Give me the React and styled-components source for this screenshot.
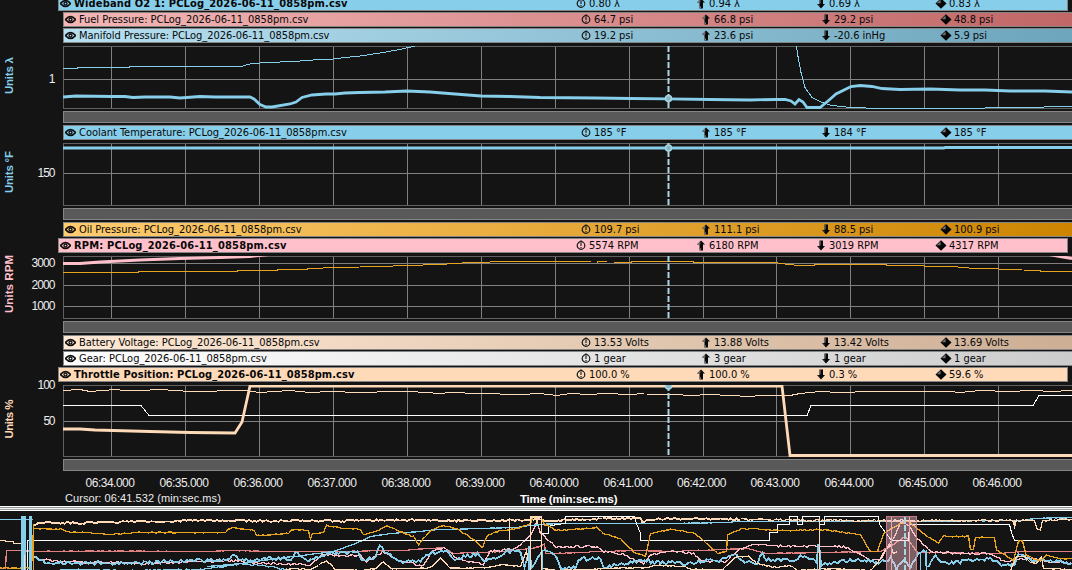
import styled, { createGlobalStyle } from "styled-components"
import React from "react"

const GlobalStyle = createGlobalStyle`
    * {
        box-sizing: border-box;
    }
    body {
        margin: 0;
        background: #141414;
        overflow: hidden;
    }
`

const Viewer = styled.div`
    width: 1072px;
    height: 570px;
    overflow: hidden;
    background: #141414;
    color: #ececec;
    font-family: "Liberation Sans", sans-serif;
`

const Panels = styled.div`
    display: flex;
    flex-direction: column;
    gap: 2px;
    margin-top: -4px;
`

const Panel = styled.section`
    display: flex;
    flex-direction: column;
    gap: 2px;
`

const Legend = styled.div`
    display: flex;
    flex-direction: column;
    gap: 1px;
    padding-bottom: 1px;
`

const LegendRow = styled.div`
    display: grid;
    grid-template-columns: 517px repeat(4, 120px);
    align-items: center;
    height: 15px;
    margin-left: ${props => props.$active ? `58px` : `63px`};
    margin-right: ${props => props.$active ? `4px` : `-8px`};
    border: 1px solid #858585;
    background: ${props => props.$fill};
    color: #080808;
    font-family: "DejaVu Sans Condensed", "DejaVu Sans", sans-serif;
    font-stretch: condensed;
    font-size: 11px;
    line-height: 13px;
    white-space: nowrap;
`

const ChannelName = styled.div`
    display: flex;
    align-items: center;
    gap: 3px;
    padding-left: 1px;
    font-weight: ${props => props.$active ? 700 : 400};
    letter-spacing: ${props => props.$spacing}px;
`

const Stat = styled.div`
    display: flex;
    align-items: center;
    gap: 3px;
    letter-spacing: -0.03px;
`

const Chart = styled.svg`
    display: block;
    overflow: visible;
    font-family: "Liberation Sans", sans-serif;
    font-size: 12px;
`

const ScrollTrack = styled.div`
    height: 12px;
    margin: 0 -2px 0 63px;
    border: 1px solid #858585;
    background: #595959;
`

const TimeAxis = styled.div`
    display: grid;
    grid-template-columns: 74px 74px 74px 74px 74px 74px 74px 74px 73px 74px 74px 74px 74px;
    margin-left: 73px;
    padding-top: 4px;
    height: 19px;
    font-size: 12px;
    line-height: 16px;
    text-align: center;
`

const TimeLabel = styled.span`
    letter-spacing: -0.5px;
`

const Footer = styled.div`
    display: grid;
    grid-template-columns: 455px 1fr;
    height: 16px;
    padding-left: 65px;
    font-size: 11px;
    line-height: 16px;
    white-space: nowrap;
`

const CursorTime = styled.span`
    letter-spacing: 0.06px;
`

const AxisTitle = styled.strong`
    font-size: 11.5px;
    line-height: 19px;
    letter-spacing: -0.2px;
    color: #fff;
`

const Splitter = styled.div`
    height: 5px;
    background: linear-gradient(#fff 1px, #8f9494 1px 2px, #f1f1f1 2px 3px, #a2a6a6 3px 4px, #fff 4px);
`

const SKY = "#87ceeb"
const PINK = "#ffc0cb"
const PEACH = "#ffdab9"
const ORANGE = "#e9a41f"
const CORAL = "#e08080"

const GRID_X = [111, 185, 259, 333, 407, 481, 555, 629, 703, 776, 850, 924, 998]
const CURSOR_X = 668.5

const panels = [
    {
        title: "Units λ", color: SKY, top: 46, height: 63, titleY: 75.5, titleLength: 37,
        ticks: [{ y: 79, label: "1" }],
        marker: 98.5,
        rows: [
            { name: "Wideband O2 1", active: true, spacing: 0.15, fill: SKY, stats: ["0.80 λ", "0.94 λ", "0.69 λ", "0.83 λ"] },
            { name: "Fuel Pressure", spacing: -0.03, fill: "linear-gradient(90deg, #f4b6b6, #c06666)", stats: ["64.7 psi", "66.8 psi", "29.2 psi", "48.8 psi"] },
            { name: "Manifold Pressure", spacing: -0.05, fill: "linear-gradient(90deg, #b7e0f1, #6ca5bc)", stats: ["19.2 psi", "23.6 psi", "-20.6 inHg", "5.9 psi"] },
        ],
        lines: [
            { color: SKY, points: "63,68 77,68 78,67 129,67 130,66 241,66 250,63.5 260,62.5 280,61.5 300,60.5 320,59 333,58.5 345,57 360,55.5 380,52.5 400,49 417,45" },
            { color: SKY, points: "796.5,46 798,56 801,72 805,87 812,97 822,102 832,105 850,107 882,108 980,108 985,107.5 1030,107 1072,105.5" },
            { color: SKY, wide: true, points: "63,97 76,96 112,96.5 125,96.5 133,97.5 145,97 170,97 180,98 200,96.5 215,97 250,97 254,99 260,104.5 266,107 272,107 290,104 296,102 302,97.5 312,95 326,94 335,94 345,93 360,92.5 385,92 407,91 430,92 455,94 481,96 510,96.5 540,97.5 595,98 630,98.5 668,98.8 710,99.5 750,100 775,99.5 785,99.5 791,101 795,104 799,99.5 803,102 807,107.5 820,107.5 828,101 836,94 845,89.5 851,86.5 860,85.5 872,86.5 882,88.5 900,89.5 930,89 960,90 985,90 1010,91 1045,91 1072,92" },
        ],
    },
    {
        title: "Units °F", color: SKY, top: 143, height: 63, titleY: 172, titleLength: 42,
        ticks: [{ y: 173, label: "150" }],
        marker: 148,
        rows: [
            { name: "Coolant Temperature", spacing: -0.02, fill: SKY, stats: ["185 °F", "185 °F", "184 °F", "185 °F"] },
        ],
        lines: [
            { color: SKY, wide: true, points: "63,148 944,148 945,147.5 1072,147.5" },
        ],
    },
    {
        title: "Units RPM", color: PINK, top: 256, height: 63, titleY: 284, titleLength: 58,
        ticks: [{ y: 263, label: "3000" }, { y: 285, label: "2000" }, { y: 306, label: "1000" }],
        rows: [
            { name: "Oil Pressure", spacing: -0.03, fill: "linear-gradient(90deg, #ffcc70, #cc8400)", stats: ["109.7 psi", "111.1 psi", "88.5 psi", "100.9 psi"] },
            { name: "RPM", active: true, spacing: 0.18, fill: PINK, stats: ["5574 RPM", "6180 RPM", "3019 RPM", "4317 RPM"] },
        ],
        lines: [
            { color: ORANGE, points: "63,272 138,272 138,271 237,271 237,270 277,270 277,269 307,269 307,268 340,267 380,266 407,265 440,264 470,262 510,261 591,261" },
            { color: ORANGE, points: "597,262 598,261 607,261" },
            { color: ORANGE, points: "614,262 631,262 631,261 693,261 693,262 775,262 788,264 800,265 814,265 814,264 886,264 886,265 923,265 925,266 952,266 975,268 1022,269" },
            { color: ORANGE, points: "1024,270 1040,270 1040,271 1072,271" },
            { color: PINK, wide: true, points: "63,263.5 80,263.5 100,262 140,260 180,258.5 220,257.5 250,256.5 275,254" },
            { color: PINK, wide: true, points: "1040,253 1060,256.5 1072,258.5" },
        ],
    },
    {
        title: "Units %", color: PEACH, top: 385, height: 72, titleY: 419, titleLength: 39,
        ticks: [{ y: 385, label: "100" }, { y: 421, label: "50" }],
        marker: 386,
        rows: [
            { name: "Battery Voltage", spacing: -0.03, fill: "linear-gradient(90deg, #ffe9d5, #ccae94)", stats: ["13.53 Volts", "13.88 Volts", "13.42 Volts", "13.69 Volts"] },
            { name: "Gear", spacing: -0.03, fill: "linear-gradient(90deg, #fff, #ccc)", stats: ["1 gear", "3 gear", "1 gear", "1 gear"] },
            { name: "Throttle Position", active: true, spacing: 0.1, fill: PEACH, stats: ["100.0 %", "100.0 %", "0.3 %", "59.6 %"] },
        ],
        lines: [
            { color: PEACH, points: "63,390 80,389 90,391 115,389 125,390 140,390 160,389 190,391 245,390 260,392 290,390 310,392 330,391 360,392 374,392 380,391 410,391 440,393 450,392 480,393 520,394 540,393 557,395 570,393 590,394 605,393 630,394 644,393" },
            { color: PEACH, points: "647,394 675,394 690,395 710,394 730,395 750,396 760,395 790,395 800,393 820,391 840,392 870,391 900,391 950,391 960,392 980,390 1010,391 1030,390 1035,390 1050,391 1072,390" },
            { color: "#fff", points: "63,405 141,405 149,415 807,415 811,405 1033,405 1039,395 1072,395" },
            { color: PEACH, wide: true, points: "63,429 80,429 95,430 150,431.5 190,432.5 235,433 242,422 250,386 782,386 790,455.5 1072,455.5" },
        ],
    },
]

const times = ["34", "35", "36", "37", "38", "39", "40", "41", "42", "43", "44", "45", "46"]

// small deterministic noise so the log overview keeps its rough traces
const rough = (source, amp, seed, step = 2) => {
    const pts = source.split(" ").map(p => p.split(",").map(Number))
    let s = seed
    const next = () => {
        s = (s * 16807) % 2147483647
        return s / 2147483647 - 0.5
    }
    const out = []
    for (let i = 0; i < pts.length - 1; i++) {
        const [x1, y1] = pts[i]
        const [x2, y2] = pts[i + 1]
        const n = Math.max(1, Math.floor((x2 - x1) / step))
        for (let k = 0; k < n; k++) {
            const y = y1 + (y2 - y1) * k / n + next() * amp * 2
            out.push(`${(x1 + (x2 - x1) * k / n).toFixed(1)},${y.toFixed(1)}`)
        }
    }
    out.push(pts[pts.length - 1].join(","))
    return out.join(" ")
}

const overview = [
    { color: CORAL, amp: 0.3, points: "0,568 5,568 6,550 21,550 33,551 100,550.5 200,551 231,550 270,551 335,551 400,550 443,547 453,553 503,551 530,548 540,546 544,543 545,553 556,553 600,551 640,550 670,551 747,548 765,553 880,551 893,544 903,537 906,537 917,552 1000,553 1020,551 1072,551" },
    { color: PINK, amp: 1.1, points: "34,558 60,561 100,562 140,563 225,560 270,563 310,564 322,555 360,555 366,562 382,551 400,561 423,565 430,552 443,547 456,558 483,564 490,551 516,548 530,535 536,522 540,533 556,547 575,546 597,546 603,551 620,553 643,563 650,555 670,550 693,553 700,560 726,561 737,550 750,544 796,546 843,546 858,553 870,561 880,558 893,538 900,523 906,523 917,538 930,551 960,553 990,553 1003,561 1030,558 1050,561 1072,563" },
    { color: SKY, amp: 2, heavy: true, points: "34,558 50,563 100,562 135,563 170,561 225,559 232,556 250,560 270,558 290,558 295,553 310,560 320,556 332,552 357,552 363,561 375,556 379,545 384,552 392,555 400,562 420,560 430,553 445,549 452,558 465,556 477,554 485,561 497,556 505,551 520,551 524,566 529,548 531,566 540,552 545,550 556,557 560,567 575,567 578,558 600,559 603,568 615,564 630,562 644,559 652,562 670,562 684,563 700,561 724,559 732,553 742,560 757,562 762,551 764,559 795,560 800,556 816,560 818,543 821,564 835,561 860,559 880,562 890,558 896,568 904,560 910,566 918,551 925,552 926,568 935,556 938,558 945,563 970,560 990,558 1003,565 1014,563 1018,552 1030,560 1050,560 1072,563" },
    { color: SKY, amp: 0.7, points: "60,569 80,569 130,570 200,569 230,565 240,563 262,565 290,570" },
    { color: SKY, amp: 0.2, points: "207,566 240,563 270,559 333,551 347,546 360,541 370,536 390,533 420,531 437,529 483,528 515,527 530,525 556,523 670,523 727,522 737,521 887,521 1023,520 1033,518 1072,517" },
    { color: PEACH, amp: 0.5, points: "284,570 292,568 310,569 326,560 335,569 360,570 375,568 383,561 390,568 420,568 430,567 440,557 450,568 486,567 503,564 520,566 526,550 529,568" },
    { color: PEACH, amp: 0.5, points: "543,568 556,570 590,569 600,568 645,567 655,565 685,566 690,569 722,569 736,556 748,556 756,563 770,566 776,567 790,565 798,570 830,568 870,570 876,564 884,551 890,545 893,553 897,551" },
    { color: PEACH, amp: 0.3, points: "1010,570 1016,556 1024,556 1030,562 1036,563 1041,556 1043,568 1072,569" },
    { color: "#fff", points: "27,570 27,540 536,540 541,540 541,533 548,533 548,526 556,524 565,523 565,516 634,516 636,523 640,533 640,540 769,540 769,532 777,532 777,524 789,524 789,516 797,516 797,524 802,524 802,516 819,516 819,524 824,524 824,516 878,516 879,524 885,532 891,540 908,540 909,524 1009,524 1011,532 1014,540 1072,540" },
    { color: PEACH, amp: 1, heavy: true, points: "33,526 38,523 50,522 80,522.5 110,521.5 165,521 190,520 230,520 270,520.5 300,520 340,520.5 400,519.5 450,520 500,520 533,519 560,520 600,518 640,518 642,522 646,519 690,518 740,519" },
    { color: PEACH, amp: 1, points: "740,519 820,520 886,520 917,520 1010,520 1013,520 1014,527 1016,520 1034,520 1037,530 1040,530 1042,520 1072,519" },
    { color: ORANGE, amp: 0.6, points: "0,567.5 31,567.5 33,528 60,528.5 66,531 100,533 106,534 140,532 225,532 228,529 232,527 245,529 254,530 256,535 270,534 288,533 291,529 308,530 310,539 312,533 323,532 326,525 337,527 360,529 363,534 376,531 386,525 400,531 413,536 418,544 423,538 430,530 441,525 456,528 470,537 482,547 487,535 497,531 517,528 530,523 532,517 541,517 544,524 556,530 596,527 603,533 620,538 633,551 645,556 650,533 670,529 693,532 703,540 717,553 726,551 727,535 741,528 786,530 820,529 860,534 870,551 877,551 883,533 900,523 908,521 920,531 938,543 943,535 950,536 968,536 970,549 973,549 975,537 994,537 996,550 1007,556 1013,560 1018,540 1022,541 1026,555 1040,560 1046,555 1060,558 1072,558" },
]

const icons = {
    current: <svg width="10" height="11" viewBox="0 0 10 11">
        <circle cx="5" cy="5.5" r="3.8" fill="none" stroke="#161616" strokeWidth="1.2" />
        <path d="M5 2.8v3.2M5 7v1.2M5 0.3v1.2" stroke="#161616" strokeWidth="1.1" />
    </svg>,
    max: <svg width="10" height="11" viewBox="0 0 10 11">
        <path d="M5 0.5 9 4.5H7V10.5H3.5V4.5H1Z" fill="#060606" />
        <path d="M1 4.4 4.3 1.2V4.4ZM3.5 7 5 9V10H3.5Z" fill="#777" />
    </svg>,
    min: <svg width="10" height="11" viewBox="0 0 10 11">
        <path d="M3.5 0.5H7V6H9L5 10.5 1 6H3.5Z" fill="#060606" />
        <path d="M3.5 1H4.7V5.5H3.5ZM1.3 6.2 3.5 7V8Z" fill="#666" />
    </svg>,
    average: <svg width="10" height="11" viewBox="0 0 10 11" overflow="visible">
        <path d="M5 0.2 10.5 5.5 5 10.8 -0.5 5.5Z" fill="#060606" />
        <path d="M0.8 5.2 4.6 1.4V5.2Z" fill="#707070" />
    </svg>,
}

const Eye = () => (
    <svg width="11" height="9" viewBox="0 0 11 9">
        <path d="M0.5 4.5Q5.5 -1.4 10.5 4.5Q5.5 10.4 0.5 4.5Z" fill="none" stroke="#0c0c0c" strokeWidth="1.6" />
        <circle cx="5.5" cy="4.5" r="1.5" fill="none" stroke="#0c0c0c" strokeWidth="1.3" />
    </svg>
)

const ChannelRow = ({ name, active, spacing, fill, stats }) => {
    const kinds = ["current", "max", "min", "average"]
    return (
        <LegendRow $active={active} $fill={fill}>
            <ChannelName $active={active} $spacing={spacing}>
                <Eye />
                {name}: PCLog_2026-06-11_0858pm.csv
            </ChannelName>
            {stats.map((value, i) => (
                <Stat key={kinds[i]}>{icons[kinds[i]]}{value}</Stat>
            ))}
        </LegendRow>
    )
}

const CursorLine = ({ x, y1, y2 }) => (
    <path d={`M${x} ${y1}V${y2}`} stroke="#a9d6e4" strokeWidth="2" strokeDasharray="6 2" />
)

const Plot = ({ title, color, top, height, titleY, titleLength, ticks, marker, lines }) => {
    const bottom = top + height
    const clip = `plot-${top}`
    return (
        <Chart width="1072" height={height} viewBox={`0 ${top} 1072 ${height}`}>
            <clipPath id={clip}>
                <rect x="63" y={top} width="1010" height={height} />
            </clipPath>
            <text
                transform={`translate(12.5 ${titleY}) rotate(-90)`}
                textAnchor="middle"
                textLength={titleLength}
                fontWeight="700"
                fontSize="11.5"
                fill={color}
            >
                {title}
            </text>
            {ticks.map(tick => (
                <text key={tick.label} x="55.5" y={tick.y + 4} textAnchor="end" textLength={tick.label.length * 6} fill="#eee">
                    {tick.label}
                </text>
            ))}
            <g shapeRendering="crispEdges" stroke="#808080">
                {GRID_X.map(x => <path key={x} d={`M${x + 0.5} ${top}V${bottom}`} />)}
                {ticks.map(tick => <path key={tick.y} d={`M63 ${tick.y + 0.5}H1072`} />)}
                <path d={`M1074 ${top + 0.5}H63.5V${bottom - 0.5}H1074`} fill="none" stroke="#606060" />
            </g>
            <g clipPath={`url(#${clip})`} fill="none">
                {lines.map((line, i) => (
                    <polyline
                        key={i}
                        points={line.points}
                        stroke={line.color}
                        strokeWidth={line.wide ? 2.8 : 1}
                        shapeRendering={line.wide ? "auto" : "crispEdges"}
                        transform={line.wide ? undefined : "translate(0 0.5)"}
                    />
                ))}
                <CursorLine x={CURSOR_X} y1={top} y2={bottom} />
                {marker && <circle cx={CURSOR_X} cy={marker} r="3" fill="#87b4c5" stroke="#a6d5e4" strokeWidth="1.5" />}
            </g>
        </Chart>
    )
}

const Overview = () => (
    <Chart width="1072" height="59" viewBox="0 511 1072 59" shapeRendering="crispEdges">
        <g fill="none">
            <path d="M0 519.5H33" stroke={SKY} />
            <path d="M0 540.5H5V541.5H13V543.5H21" stroke={PEACH} />
            {overview.map((line, i) => (
                <polyline
                    key={i}
                    points={line.amp ? rough(line.points, line.amp, 71 + i * 37) : line.points}
                    stroke={line.color}
                    strokeWidth={line.heavy ? 1.8 : line.amp ? 1.3 : 1}
                    transform="translate(0.5 0.5)"
                />
            ))}
            <path d="M509.5 518V540M530.5 570V517H541.5V570M537 524V518M819.5 517V570M1014.5 520V529" stroke={PEACH} strokeWidth="1.2" />
            <path d="M529 546V570M542.5 550V570M817.5 544V570M820.5 550V570M920.5 552V570M926.5 550V570" stroke={SKY} strokeWidth="1.4" />
            <path d="M29.5 570V541" stroke={PEACH} />
            <path d="M33 524V570" stroke={ORANGE} />
        </g>
        <rect x="21" y="516" width="5" height="54" fill={SKY} />
        <rect x="29" y="516" width="3" height="54" fill={SKY} />
        <path d="M24.5 555V570" stroke={PEACH} />
        <rect x="886.5" y="516.5" width="30" height="54" fill="#ffc0cb" fillOpacity="0.43" stroke="#c77d8c" />
        <path d="M891.5 517V570M909.5 517V570" stroke="#e8a8b0" />
        <CursorLine x={905} y1={517} y2={570} />
    </Chart>
)

export default function App() {
    return (
        <Viewer>
            <GlobalStyle />
            <Panels>
                {panels.map(({ rows, ...plot }) => (
                    <Panel key={plot.title}>
                        <Legend>
                            {rows.map(row => <ChannelRow key={row.name} {...row} />)}
                        </Legend>
                        <Plot {...plot} />
                        <ScrollTrack />
                    </Panel>
                ))}
            </Panels>
            <TimeAxis>
                {times.map(sec => <TimeLabel key={sec}>06:{sec}.000</TimeLabel>)}
            </TimeAxis>
            <Footer>
                <CursorTime>Cursor: 06:41.532 (min:sec.ms)</CursorTime>
                <AxisTitle>Time (min:sec.ms)</AxisTitle>
            </Footer>
            <Splitter />
            <Overview />
        </Viewer>
    )
}
